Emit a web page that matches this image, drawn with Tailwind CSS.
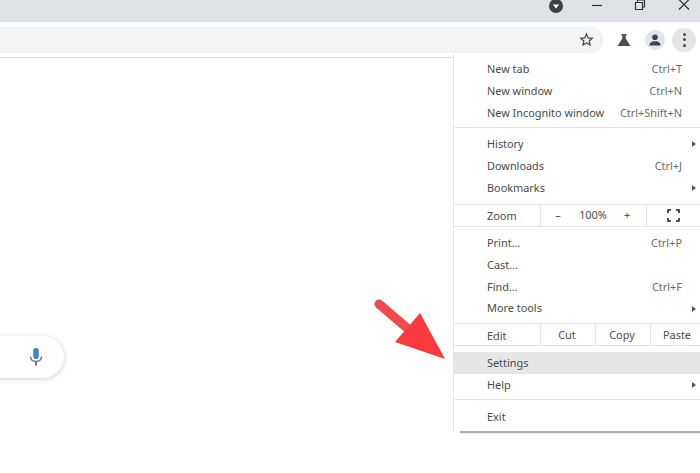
<!DOCTYPE html>
<html>
<head>
<meta charset="utf-8">
<script src="https://cdn.jsdelivr.net/npm/@tailwindcss/browser@4"></script>
</head>
<body class="bg-white">
<div class="relative w-[700px] h-[473px] overflow-hidden bg-white font-['Noto_Sans',sans-serif] text-[10.9px] text-[#4a4a4a]">
  <!-- title bar -->
  <div class="h-[22px] bg-[#dee1e6] flex items-center justify-end">
    <svg class="w-[16px] h-[16px] mr-[27px] -translate-y-[5px]" viewBox="0 0 16 16"><circle cx="8" cy="8" r="7" fill="#3c4043"/><path d="M4.800 6.500h6.400L8 10.500z" fill="#fff"/></svg>
    <svg class="w-[12px] h-[12px] mr-[31px] -translate-y-[6px]" viewBox="0 0 12 12"><path d="M1 6.500h10" stroke="#333" stroke-width="1.200"/></svg>
    <svg class="w-[12px] h-[12px] mr-[32px] -translate-y-[6px]" viewBox="0 0 12 12"><path d="M3.500 3V1h7v7H8.500M1.500 3.500h7v7h-7z" fill="none" stroke="#333" stroke-width="1.200"/></svg>
    <svg class="w-[12px] h-[12px] mr-[10px] -translate-y-[6px]" viewBox="0 0 12 12"><path d="M1 0.500l10 10M11 0.500l-10 10" stroke="#333" stroke-width="1.200"/></svg>
  </div>
  <!-- toolbar -->
  <div class="h-[36px] bg-white border-b border-[#dadce0] flex items-center">
    <div class="w-[603px] h-[26px] bg-[#f1f3f4] rounded-r-full flex items-center justify-end pr-[9px]">
      <svg class="w-[15px] h-[15px]" viewBox="0 0 24 24"><path d="M12 3.500l2.600 6 6.500.6-4.900 4.300 1.500 6.400L12 17.400 6.300 20.800l1.500-6.400-4.900-4.300 6.500-.6z" fill="none" stroke="#45484c" stroke-width="2"/></svg>
    </div>
    <svg class="w-[16px] h-[14px] ml-[13px]" viewBox="0 0 16 14"><path d="M5.500 1h5v1.500H9.700V5.500L14.500 13h-13L6.300 5.500V2.500H5.500z" fill="#4a4d52"/></svg>
    <div class="w-[20px] h-[20px] ml-[13px] rounded-full bg-[#e0e4ec] flex items-center justify-center">
      <svg class="w-[14px] h-[14px]" viewBox="0 0 14 14"><circle cx="7" cy="4.300" r="2.800" fill="#3f4349"/><path d="M1.500 12.500c0-3 2.500-4.300 5.500-4.300s5.500 1.300 5.500 4.300z" fill="#3f4349"/></svg>
    </div>
    <div class="w-[24px] h-[24px] ml-[7px] rounded-full bg-[#e4e5e7] flex flex-col items-center justify-center gap-[2.500px]">
      <span class="w-[3px] h-[3px] rounded-full bg-[#45484c]"></span>
      <span class="w-[3px] h-[3px] rounded-full bg-[#45484c]"></span>
      <span class="w-[3px] h-[3px] rounded-full bg-[#45484c]"></span>
    </div>
  </div>

  <!-- search box fragment -->
  <div class="absolute left-[-40px] top-[336px] w-[104px] h-[42px] bg-white rounded-full shadow-[0_1px_5px_rgba(32,33,36,0.22)] flex items-center justify-end pr-[20px]">
    <svg class="w-[16px] h-[20px]" viewBox="0 0 16 20"><rect x="5.200" y="1" width="5.600" height="11" rx="2.800" fill="#4285c4"/><path d="M2.500 9.500c0 3.200 2.500 5 5.500 5s5.500-1.800 5.500-5" fill="none" stroke="#8a6d80" stroke-width="1.600"/><rect x="7" y="14" width="2" height="4.500" fill="#7d6a78"/></svg>
  </div>

  <!-- menu -->
  <div class="absolute left-[453px] top-[54px] w-[260px] h-[377px] bg-white border-l border-[#e2e2e2] shadow-[7px_2px_1px_rgba(120,120,120,0.6)] flex flex-col">
    <div class="h-[4px]"></div>
    <div class="flex items-center h-[22px] pl-[33px] pr-[31px] justify-between"><span>New tab</span><span class="text-[#6a6a6a]">Ctrl+T</span></div>
    <div class="flex items-center h-[22px] pl-[33px] pr-[31px] justify-between"><span>New window</span><span class="text-[#6a6a6a]">Ctrl+N</span></div>
    <div class="flex items-center h-[22px] pl-[33px] pr-[31px] justify-between"><span>New Incognito window</span><span class="text-[#6a6a6a]">Ctrl+Shift+N</span></div>
    <div class="h-[4px] border-b border-[#e4e4e4] mb-[5px]"></div>
    <div class="flex items-center h-[22px] pl-[33px] pr-[13px] justify-between"><span>History</span><span class="w-0 h-0 border-y-[3.500px] border-y-transparent border-l-[4px] border-l-[#555] mr-[4px]"></span></div>
    <div class="flex items-center h-[22px] pl-[33px] pr-[31px] justify-between"><span>Downloads</span><span class="text-[#6a6a6a]">Ctrl+J</span></div>
    <div class="flex items-center h-[22px] pl-[33px] pr-[13px] justify-between"><span>Bookmarks</span><span class="w-0 h-0 border-y-[3.500px] border-y-transparent border-l-[4px] border-l-[#555] mr-[4px]"></span></div>
    <div class="h-[5px]"></div>
    <div class="flex h-[23px] border-y border-[#e4e4e4]">
      <div class="w-[87px] pl-[33px] pt-[1px] flex items-center border-r border-[#e4e4e4]">Zoom</div>
      <div class="w-[106px] flex items-center border-r border-[#e4e4e4] pl-[12px]">
        <span class="w-[10px] text-center">–</span><span class="w-[58px] text-center ml-[1px]">100%</span><span class="w-[10px] text-center">+</span>
      </div>
      <div class="w-[53px] flex items-center justify-center">
        <svg class="w-[13px] h-[13px]" viewBox="0 0 13 13"><path d="M1 4V1h3M9 1h3v3M12 9v3H9M4 12H1V9" fill="none" stroke="#222" stroke-width="1.600"/></svg>
      </div>
    </div>
    <div class="h-[5px]"></div>
    <div class="flex items-center h-[22px] pl-[33px] pr-[31px] justify-between"><span>Print...</span><span class="text-[#6a6a6a]">Ctrl+P</span></div>
    <div class="flex items-center h-[22px] pl-[33px] pr-[31px] justify-between"><span>Cast...</span></div>
    <div class="flex items-center h-[22px] pl-[33px] pr-[31px] justify-between"><span>Find...</span><span class="text-[#6a6a6a]">Ctrl+F</span></div>
    <div class="flex items-center h-[21px] pl-[33px] pr-[13px] justify-between"><span>More tools</span><span class="w-0 h-0 border-y-[3.500px] border-y-transparent border-l-[4px] border-l-[#555] mr-[4px]"></span></div>
    <div class="h-[4px]"></div>
    <div class="flex h-[23px] border-y border-[#e4e4e4]">
      <div class="w-[87px] pl-[33px] pt-[3px] flex items-center border-r border-[#e4e4e4]">Edit</div>
      <div class="w-[55px] pr-[2px] pt-[2px] flex items-center justify-center border-r border-[#e4e4e4]">Cut</div>
      <div class="w-[55px] pr-[2px] pt-[2px] flex items-center justify-center border-r border-[#e4e4e4]">Copy</div>
      <div class="w-[50px] pl-[2px] pt-[2px] flex items-center justify-center">Paste</div>
    </div>
    <div class="h-[6px]"></div>
    <div class="flex items-center h-[22px] pl-[33px] bg-[#e6e6e6]"><span>Settings</span></div>
    <div class="flex items-center h-[22px] pl-[33px] pr-[13px] justify-between"><span>Help</span><span class="w-0 h-0 border-y-[3.500px] border-y-transparent border-l-[4px] border-l-[#555] mr-[4px]"></span></div>
    <div class="h-[4px] border-b border-[#e4e4e4] mb-[6px]"></div>
    <div class="flex items-center h-[22px] pl-[33px]"><span>Exit</span></div>
  </div>

  <!-- arrow -->
  <svg class="absolute left-[370px] top-[295px] w-[80px] h-[70px]" viewBox="0 0 80 70"><path d="M9 9L37 33" stroke="#f04a4f" stroke-width="9" stroke-linecap="round"/><path d="M50 18L75 64L25 47z" fill="#fb3a3d"/></svg>
</div>
</body>
</html>
